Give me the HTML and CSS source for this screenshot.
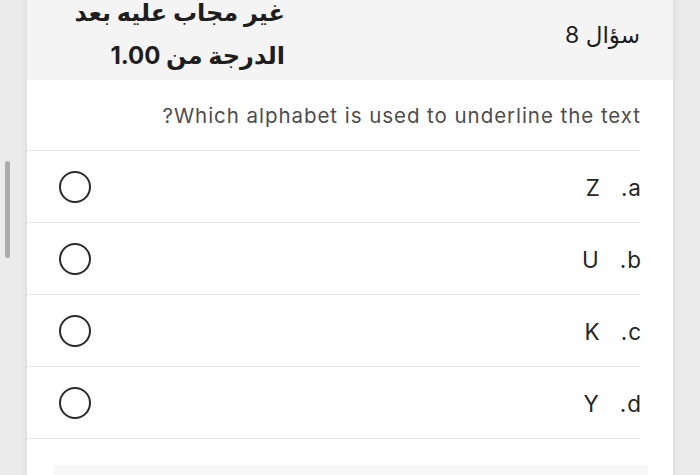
FILE: index.html
```html
<!DOCTYPE html>
<html lang="ar">
<head>
<meta charset="utf-8">
<title>سؤال 8</title>
<link rel="stylesheet" href="styles.css">
</head>
<body>
<div class="viewport">
  <div class="scrollbar"></div>
  <main class="card" dir="rtl">
    <header class="q-head">
      <div class="q-no">سؤال 8</div>
      <div class="q-state">
        <div class="q-line">غير مجاب عليه بعد</div>
        <div class="q-line">الدرجة من 1.00</div>
      </div>
    </header>
    <section class="q-body">
      <p class="q-text">Which alphabet is used to underline the text?</p>
      <ul class="answers">
        <li class="answer">
          <span class="ans-label"><span class="ans-key">a.</span><span class="ans-val">Z</span></span>
          <span class="radio"></span>
        </li>
        <li class="answer">
          <span class="ans-label"><span class="ans-key">b.</span><span class="ans-val">U</span></span>
          <span class="radio"></span>
        </li>
        <li class="answer">
          <span class="ans-label"><span class="ans-key">c.</span><span class="ans-val">K</span></span>
          <span class="radio"></span>
        </li>
        <li class="answer">
          <span class="ans-label"><span class="ans-key">d.</span><span class="ans-val">Y</span></span>
          <span class="radio"></span>
        </li>
      </ul>
    </section>
    <div class="next-panel"></div>
  </main>
</div>
</body>
</html>
```
FILE: styles.css
```css
html, body {
  margin: 0;
  padding: 0;
}
body {
  background: #ebebeb;
  font-family: Inter, "DejaVu Sans", sans-serif;
  color: #222;
}
.viewport {
  position: relative;
  width: 700px;
  height: 475px;
  overflow: hidden;
  box-sizing: border-box;
  padding: 0 27px;
}
.scrollbar {
  position: absolute;
  left: 5px;
  top: 161px;
  width: 5px;
  height: 97px;
  border-radius: 3px;
  background: #ababab;
}
.card {
  margin-top: -9px;
  background: #fff;
  min-height: 520px;
  box-shadow: 0 0 7px rgba(0, 0, 0, 0.09);
}
.q-head {
  display: grid;
  grid-template-columns: 355px auto;
  align-items: center;
  background: #f4f4f4;
  padding: 0 33px 3px 0;
}
.q-no {
  font-size: 23px;
  line-height: 43px;
  color: #1e1e1e;
  padding-top: 2px;
}
.q-state {
  font-size: 24px;
  font-weight: bold;
  line-height: 43px;
  color: #1e1e1e;
}
.q-body {
  padding: 0 33px 0 0;
}
.q-text {
  margin: 0 -1px 0 0;
  padding: 24px 0 22px;
  font-size: 20.5px;
  letter-spacing: 0.95px;
  line-height: 24px;
  color: #4d4d4d;
}
.answers {
  list-style: none;
  margin: 0;
  padding: 0;
  border-top: 1px solid #e6e6e6;
}
.answer {
  display: flex;
  align-items: center;
  justify-content: space-between;
  height: 71px;
  padding-left: 32px;
  border-bottom: 1px solid #e6e6e6;
}
.ans-label {
  display: flex;
  gap: 20px;
  margin-right: -2px;
  font-size: 22.5px;
  letter-spacing: 1px;
  line-height: 26px;
  color: #262626;
  padding-top: 3px;
}
.radio {
  width: 32px;
  height: 32px;
  box-sizing: border-box;
  border: 2px solid #2a2a2a;
  border-radius: 50%;
}
.next-panel {
  margin: 26px 25px 0 26px;
  height: 40px;
  background: #f8f8f8;
}
```
